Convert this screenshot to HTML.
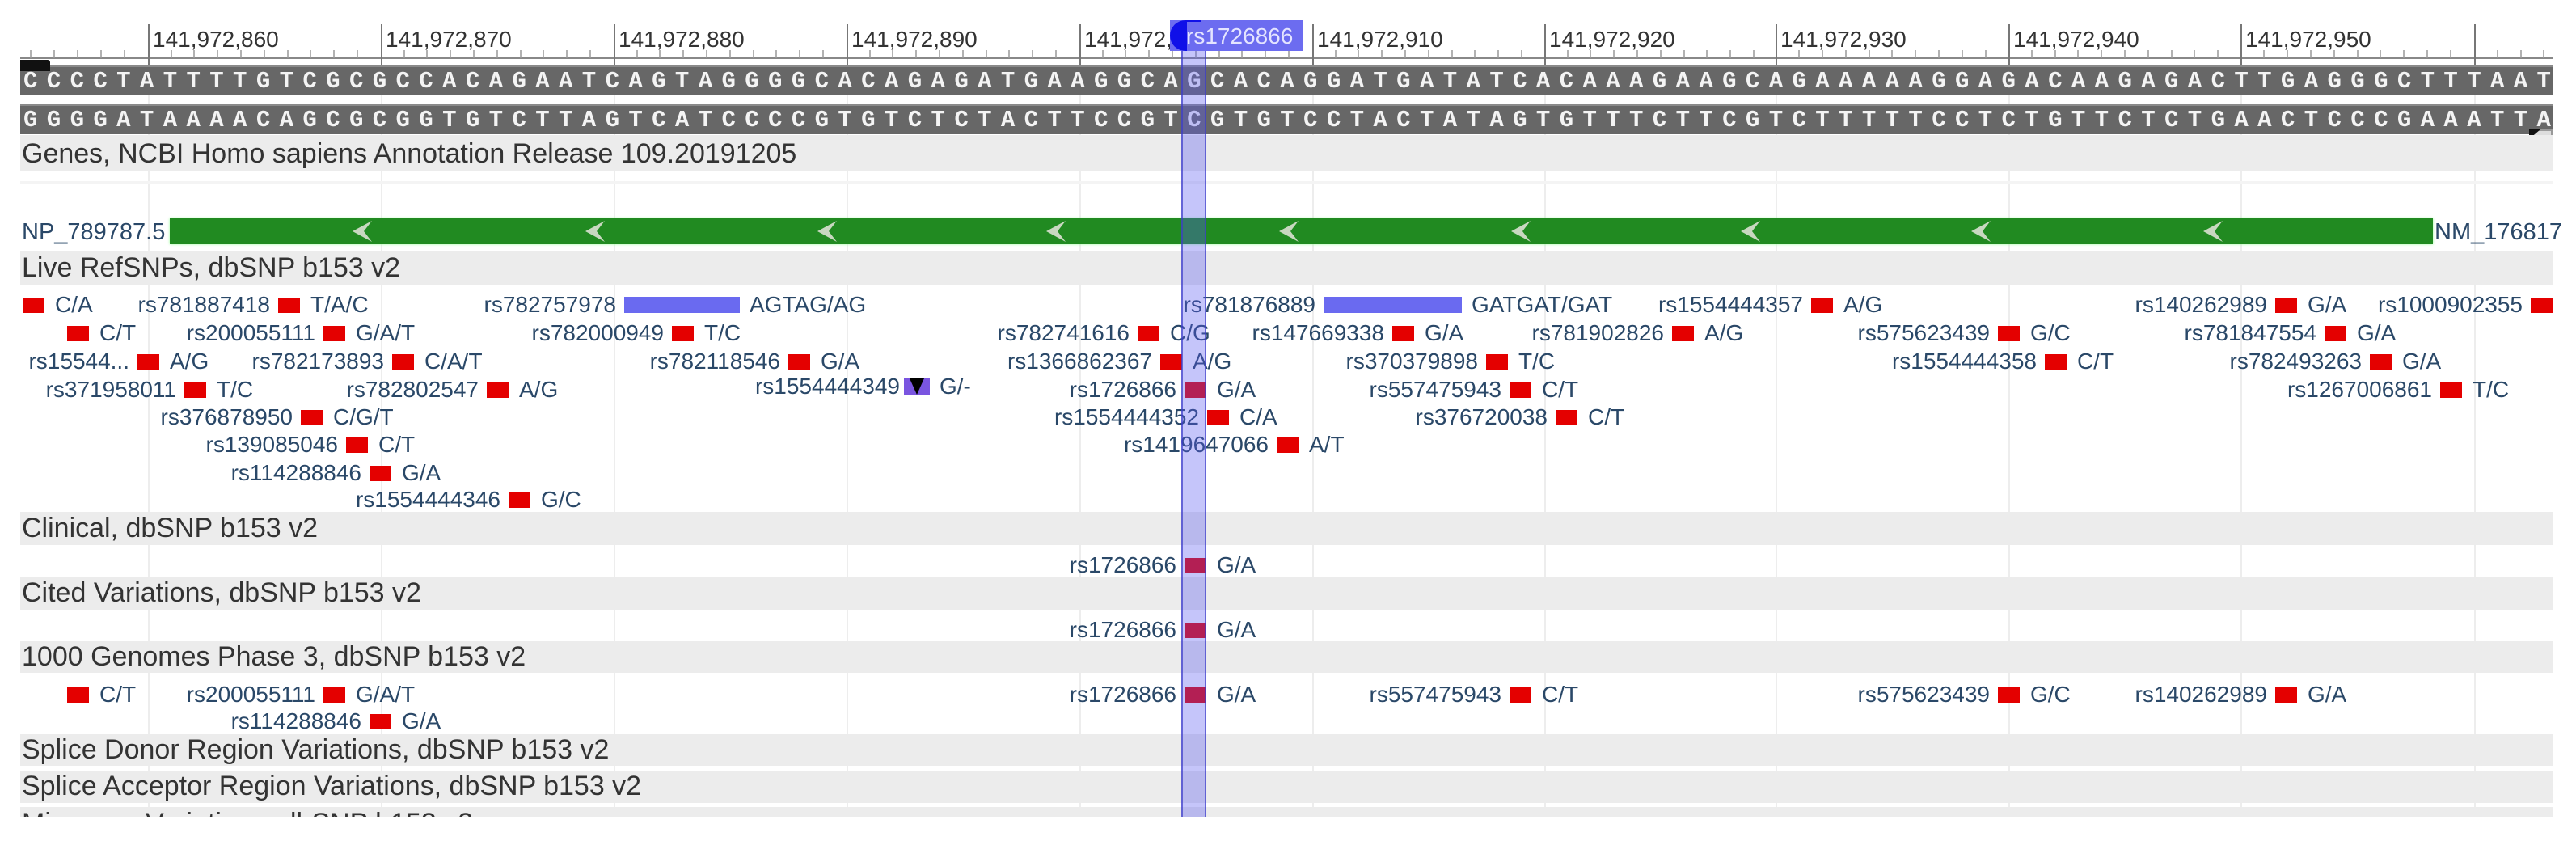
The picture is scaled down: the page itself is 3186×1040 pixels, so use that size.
<!DOCTYPE html>
<html><head><meta charset="utf-8"><style>
*{margin:0;padding:0;box-sizing:border-box}
body{width:3186px;height:1040px;background:#fff;position:relative;overflow:hidden;font-family:"Liberation Sans",Arial,sans-serif}
.a{position:absolute}
.rl{position:absolute;top:34px;font-size:28px;color:#333;white-space:nowrap;line-height:30px}
.mj{position:absolute;top:30px;width:2px;height:50px;background:#777}
.grid{position:absolute;top:80px;width:2px;height:930px;background:rgba(0,0,0,0.07)}
.seq{position:absolute;left:25px;width:3132px;height:38px;background:#676767;border-top:3px solid #8a8a8a;overflow:hidden}
.seq span{position:absolute;left:4px;top:2px;font-family:"Liberation Mono",monospace;font-weight:bold;font-size:29px;line-height:32px;letter-spacing:11.38px;color:#f4f4f4;white-space:nowrap}
.band{position:absolute;left:25px;width:3132px;background:#ececec}
.tl{position:absolute;left:27px;font-size:34px;color:#333;white-space:nowrap;line-height:40px}
.s{position:absolute;width:27px;height:19px;background:#e40000;font-size:28px;line-height:30px;color:#2a4868}
.s b{position:absolute;right:37px;top:-6px;white-space:nowrap;font-weight:normal}
.s em{position:absolute;left:40px;top:-6px;font-style:normal;white-space:nowrap}
.bb{position:absolute;height:20px;background:#6a6af0;font-size:28px;line-height:30px;color:#2a4868}
.bb b{position:absolute;right:calc(100% + 10px);top:-5px;white-space:nowrap;font-weight:normal}
.bb em{position:absolute;left:calc(100% + 12px);top:-5px;font-style:normal;white-space:nowrap}
</style></head><body>

<div class="grid" style="left:183px"></div><div class="grid" style="left:471px"></div><div class="grid" style="left:759px"></div><div class="grid" style="left:1047px"></div><div class="grid" style="left:1335px"></div><div class="grid" style="left:1623px"></div><div class="grid" style="left:1910px"></div><div class="grid" style="left:2196px"></div><div class="grid" style="left:2484px"></div><div class="grid" style="left:2771px"></div><div class="grid" style="left:3060px"></div>

<div class="a" style="left:25px;top:71px;width:3132px;height:2px;background:#888"></div>
<svg class="a" style="left:0;top:60px" width="3186" height="14">
<g stroke="#999" stroke-width="1.5">
<path d="M38 2V12M67 2V12M96 2V12M125 2V12M154 2V12M212 2V12M240 2V12M269 2V12M298 2V12M327 2V12M356 2V12M384 2V12M413 2V12M442 2V12M500 2V12M528 2V12M557 2V12M586 2V12M615 2V12M644 2V12M672 2V12M701 2V12M730 2V12M788 2V12M816 2V12M845 2V12M874 2V12M903 2V12M932 2V12M960 2V12M989 2V12M1018 2V12M1076 2V12M1104 2V12M1133 2V12M1162 2V12M1191 2V12M1220 2V12M1248 2V12M1277 2V12M1306 2V12M1364 2V12M1392 2V12M1421 2V12M1450 2V12M1479 2V12M1508 2V12M1536 2V12M1565 2V12M1594 2V12M1652 2V12M1680 2V12M1709 2V12M1738 2V12M1767 2V12M1796 2V12M1824 2V12M1853 2V12M1882 2V12M1939 2V12M1967 2V12M1996 2V12M2025 2V12M2054 2V12M2083 2V12M2111 2V12M2140 2V12M2169 2V12M2225 2V12M2254 2V12M2283 2V12M2312 2V12M2340 2V12M2369 2V12M2398 2V12M2427 2V12M2456 2V12M2513 2V12M2542 2V12M2570 2V12M2599 2V12M2628 2V12M2657 2V12M2686 2V12M2714 2V12M2743 2V12M2800 2V12M2829 2V12M2858 2V12M2887 2V12M2916 2V12M2944 2V12M2973 2V12M3002 2V12M3031 2V12M3089 2V12M3118 2V12M3146 2V12"/>
</g></svg>
<div class="mj" style="left:183px"></div><div class="mj" style="left:471px"></div><div class="mj" style="left:759px"></div><div class="mj" style="left:1047px"></div><div class="mj" style="left:1335px"></div><div class="mj" style="left:1623px"></div><div class="mj" style="left:1910px"></div><div class="mj" style="left:2196px"></div><div class="mj" style="left:2484px"></div><div class="mj" style="left:2771px"></div><div class="mj" style="left:3060px"></div>
<div class="rl" style="left:189px">141,972,860</div>
<div class="rl" style="left:477px">141,972,870</div>
<div class="rl" style="left:765px">141,972,880</div>
<div class="rl" style="left:1053px">141,972,890</div>
<div class="rl" style="left:1341px">141,972,900</div>
<div class="rl" style="left:1629px">141,972,910</div>
<div class="rl" style="left:1916px">141,972,920</div>
<div class="rl" style="left:2202px">141,972,930</div>
<div class="rl" style="left:2490px">141,972,940</div>
<div class="rl" style="left:2777px">141,972,950</div>

<div class="seq" style="top:80px"><span>CCCCTATTTTGTCGCGCCACAGAATCAGTAGGGGCACAGAGATGAAGGCAGCACAGGATGATATCACAAAGAAGCAGAAAAAGGAGACAAGAGACTTGAGGGCTTTAAT</span></div>
<div class="seq" style="top:128px"><span>GGGGATAAAACAGCGCGGTGTCTTAGTCATCCCCGTGTCTCTACTTCCGTCGTGTCCTACTATAGTGTTTCTTCGTCTTTTTCCTCTGTTCTCTGAACTCCCGAAATTA</span></div>
<div class="a" style="left:25px;top:74px;width:37px;height:14px;background:#111;border-radius:0 3px 0 0"></div>
<div class="a" style="left:3130px;top:160px;width:27px;height:34px;background:#ddd;border:2px solid #999;font-size:16px;color:#666;line-height:30px;text-align:center">5'</div>
<div class="a" style="left:3128px;top:160px;width:0;height:0;border-top:12px solid #111;border-right:14px solid transparent"></div>

<div class="band" style="top:167px;height:45px"></div>
<div class="tl" style="top:170px">Genes, NCBI Homo sapiens Annotation Release 109.20191205</div>
<div class="band" style="top:224px;height:4px;background:#f4f4f4"></div>
<div class="a" style="left:27px;top:272px;font-size:29px;line-height:30px;color:#2a4868">NP_789787.5</div>
<div class="a" style="left:210px;top:270px;width:2799px;height:32px;background:#218a21;box-shadow:0 0 3px #9f9"></div>
<div class="a" style="left:3011px;top:272px;font-size:29px;line-height:30px;color:#2a4868">NM_176817</div>
<svg class="a" style="left:0;top:270px" width="3186" height="32"><g fill="#c8d8c0">
<path d="M436 16L460 3L450 16L460 29Z"/><path d="M724 16L748 3L738 16L748 29Z"/><path d="M1011 16L1035 3L1025 16L1035 29Z"/><path d="M1294 16L1318 3L1308 16L1318 29Z"/><path d="M1582 16L1606 3L1596 16L1606 29Z"/><path d="M1869 16L1893 3L1883 16L1893 29Z"/><path d="M2153 16L2177 3L2167 16L2177 29Z"/><path d="M2438 16L2462 3L2452 16L2462 29Z"/><path d="M2725 16L2749 3L2739 16L2749 29Z"/>
</g></svg>

<div class="band" style="top:310px;height:43px"></div>
<div class="tl" style="top:311px">Live RefSNPs, dbSNP b153 v2</div>

<div class="s" style="left:28px;top:368px"><em>C/A</em></div>
<div class="s" style="left:344px;top:368px"><b>rs781887418</b><em>T/A/C</em></div>
<div class="bb" style="left:772px;top:367px;width:143px"><b>rs782757978</b><em>AGTAG/AG</em></div>
<div class="bb" style="left:1637px;top:367px;width:171px"><b>rs781876889</b><em>GATGAT/GAT</em></div>
<div class="s" style="left:2240px;top:368px"><b>rs1554444357</b><em>A/G</em></div>
<div class="s" style="left:2814px;top:368px"><b>rs140262989</b><em>G/A</em></div>
<div class="s" style="left:3130px;top:368px;width:27px"><b>rs1000902355</b></div>
<div class="s" style="left:83px;top:403px"><em>C/T</em></div>
<div class="s" style="left:400px;top:403px"><b>rs200055111</b><em>G/A/T</em></div>
<div class="s" style="left:831px;top:403px"><b>rs782000949</b><em>T/C</em></div>
<div class="s" style="left:1407px;top:403px"><b>rs782741616</b><em>C/G</em></div>
<div class="s" style="left:1722px;top:403px"><b>rs147669338</b><em>G/A</em></div>
<div class="s" style="left:2068px;top:403px"><b>rs781902826</b><em>A/G</em></div>
<div class="s" style="left:2471px;top:403px"><b>rs575623439</b><em>G/C</em></div>
<div class="s" style="left:2875px;top:403px"><b>rs781847554</b><em>G/A</em></div>
<div class="s" style="left:170px;top:438px"><b>rs15544...</b><em>A/G</em></div>
<div class="s" style="left:485px;top:438px"><b>rs782173893</b><em>C/A/T</em></div>
<div class="s" style="left:975px;top:438px"><b>rs782118546</b><em>G/A</em></div>
<div class="s" style="left:1435px;top:438px"><b>rs1366862367</b><em>A/G</em></div>
<div class="s" style="left:1838px;top:438px"><b>rs370379898</b><em>T/C</em></div>
<div class="s" style="left:2529px;top:438px"><b>rs1554444358</b><em>C/T</em></div>
<div class="s" style="left:2931px;top:438px"><b>rs782493263</b><em>G/A</em></div>
<div class="s" style="left:228px;top:473px"><b>rs371958011</b><em>T/C</em></div>
<div class="s" style="left:602px;top:473px"><b>rs782802547</b><em>A/G</em></div>
<div class="s" style="left:1118px;top:468px;width:32px;height:20px;background:#7a55e0"><svg class="a" style="left:0;top:0" width="32" height="20"><path d="M7 0H25L16 20Z" fill="#000"/></svg><b style="top:-5px">rs1554444349</b><em style="top:-5px;left:44px">G/-</em></div>
<div class="s" style="left:1465px;top:473px"><b>rs1726866</b><em>G/A</em></div>
<div class="s" style="left:1867px;top:473px"><b>rs557475943</b><em>C/T</em></div>
<div class="s" style="left:3018px;top:473px"><b>rs1267006861</b><em>T/C</em></div>
<div class="s" style="left:372px;top:507px"><b>rs376878950</b><em>C/G/T</em></div>
<div class="s" style="left:1493px;top:507px"><b>rs1554444352</b><em>C/A</em></div>
<div class="s" style="left:1924px;top:507px"><b>rs376720038</b><em>C/T</em></div>
<div class="s" style="left:428px;top:541px"><b>rs139085046</b><em>C/T</em></div>
<div class="s" style="left:1579px;top:541px"><b>rs1419647066</b><em>A/T</em></div>
<div class="s" style="left:457px;top:576px"><b>rs114288846</b><em>G/A</em></div>
<div class="s" style="left:629px;top:609px"><b>rs1554444346</b><em>G/C</em></div>

<div class="band" style="top:633px;height:41px"></div>
<div class="tl" style="top:633px">Clinical, dbSNP b153 v2</div>
<div class="s" style="left:1465px;top:690px"><b>rs1726866</b><em>G/A</em></div>

<div class="band" style="top:713px;height:41px"></div>
<div class="tl" style="top:713px">Cited Variations, dbSNP b153 v2</div>
<div class="s" style="left:1465px;top:770px"><b>rs1726866</b><em>G/A</em></div>

<div class="band" style="top:793px;height:39px"></div>
<div class="tl" style="top:792px">1000 Genomes Phase 3, dbSNP b153 v2</div>
<div class="s" style="left:83px;top:850px"><em>C/T</em></div>
<div class="s" style="left:400px;top:850px"><b>rs200055111</b><em>G/A/T</em></div>
<div class="s" style="left:457px;top:883px"><b>rs114288846</b><em>G/A</em></div>
<div class="s" style="left:1465px;top:850px"><b>rs1726866</b><em>G/A</em></div>
<div class="s" style="left:1867px;top:850px"><b>rs557475943</b><em>C/T</em></div>
<div class="s" style="left:2471px;top:850px"><b>rs575623439</b><em>G/C</em></div>
<div class="s" style="left:2814px;top:850px"><b>rs140262989</b><em>G/A</em></div>

<div class="band" style="top:908px;height:39px"></div>
<div class="tl" style="top:907px">Splice Donor Region Variations, dbSNP b153 v2</div>
<div class="band" style="top:953px;height:40px"></div>
<div class="tl" style="top:952px">Splice Acceptor Region Variations, dbSNP b153 v2</div>
<div class="band" style="top:998px;height:12px;overflow:hidden"><div class="tl" style="left:2px;top:0px">Missense Variations, dbSNP b153 v2</div></div>

<div class="a" style="left:1461px;top:63px;width:31px;height:947px;background:rgba(90,90,240,0.35);border-left:2px solid rgba(60,60,200,0.7);border-right:2px solid rgba(60,60,200,0.7)"></div>
<div class="a" style="left:1447px;top:25px;width:165px;height:38px;background:#6c6cf0"></div>
<div class="a" style="left:1447px;top:25px;width:38px;height:38px;background:#1010e8;border-radius:19px 0 0 19px"></div>
<div class="a" style="left:1468px;top:27px;width:40px;height:36px;background:#6c6cf0"></div>
<div class="a" style="left:1467px;top:29px;font-size:28px;line-height:32px;color:#e4e4ff">rs1726866</div>

</body></html>
